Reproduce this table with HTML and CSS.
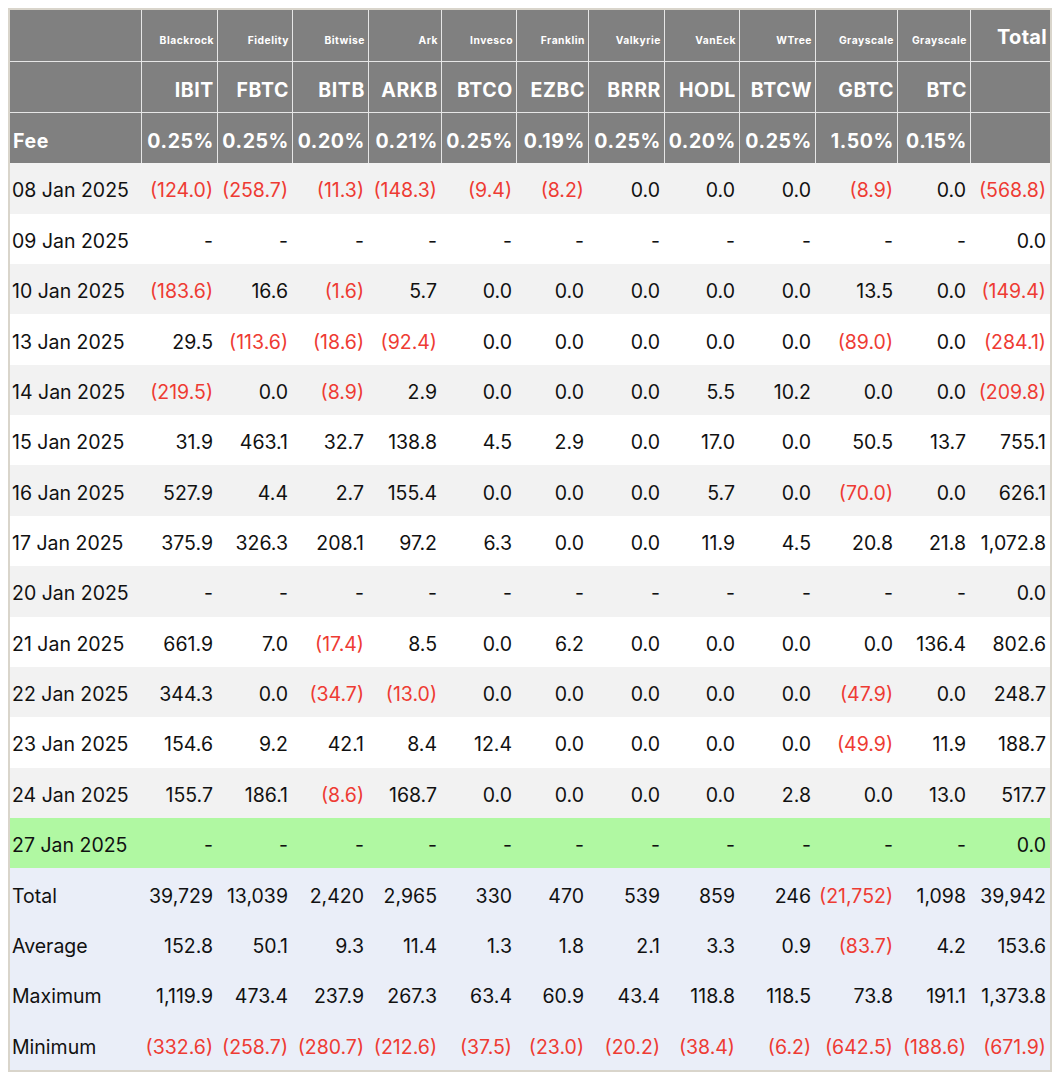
FILE: index.html
```html
<!DOCTYPE html>
<html lang="en">
<head>
<meta charset="utf-8">
<title>Bitcoin ETF Flow</title>
<link rel="stylesheet" href="styles.css">
</head>
<body>
<table class="flows">
  <colgroup>
    <col class="c-date">
    <col class="c76"><col class="c75"><col class="c76"><col class="c73"><col class="c75"><col class="c72">
    <col class="c76"><col class="c75"><col class="c76"><col class="c82"><col class="c73"><col class="c80">
  </colgroup>
  <thead>
    <tr class="h-issuer">
      <th class="first"></th>
      <th><span class="issuer">Blackrock</span></th>
      <th><span class="issuer">Fidelity</span></th>
      <th><span class="issuer">Bitwise</span></th>
      <th><span class="issuer">Ark</span></th>
      <th><span class="issuer">Invesco</span></th>
      <th><span class="issuer">Franklin</span></th>
      <th><span class="issuer">Valkyrie</span></th>
      <th><span class="issuer">VanEck</span></th>
      <th><span class="issuer">WTree</span></th>
      <th><span class="issuer">Grayscale</span></th>
      <th><span class="issuer">Grayscale</span></th>
      <th class="total-h">Total</th>
    </tr>
    <tr class="h-ticker">
      <th class="first"></th>
      <th>IBIT</th><th>FBTC</th><th>BITB</th><th>ARKB</th><th>BTCO</th><th>EZBC</th>
      <th>BRRR</th><th>HODL</th><th>BTCW</th><th>GBTC</th><th>BTC</th><th></th>
    </tr>
    <tr class="h-fee">
      <th class="first">Fee</th>
      <th>0.25%</th><th>0.25%</th><th>0.20%</th><th>0.21%</th><th>0.25%</th><th>0.19%</th>
      <th>0.25%</th><th>0.20%</th><th>0.25%</th><th>1.50%</th><th>0.15%</th><th></th>
    </tr>
  </thead>
  <tbody>
    <tr><td>08 Jan 2025</td><td class="neg">(124.0)</td><td class="neg">(258.7)</td><td class="neg">(11.3)</td><td class="neg">(148.3)</td><td class="neg">(9.4)</td><td class="neg">(8.2)</td><td>0.0</td><td>0.0</td><td>0.0</td><td class="neg">(8.9)</td><td>0.0</td><td class="neg">(568.8)</td></tr>
    <tr><td>09 Jan 2025</td><td>-</td><td>-</td><td>-</td><td>-</td><td>-</td><td>-</td><td>-</td><td>-</td><td>-</td><td>-</td><td>-</td><td>0.0</td></tr>
    <tr><td>10 Jan 2025</td><td class="neg">(183.6)</td><td>16.6</td><td class="neg">(1.6)</td><td>5.7</td><td>0.0</td><td>0.0</td><td>0.0</td><td>0.0</td><td>0.0</td><td>13.5</td><td>0.0</td><td class="neg">(149.4)</td></tr>
    <tr><td>13 Jan 2025</td><td>29.5</td><td class="neg">(113.6)</td><td class="neg">(18.6)</td><td class="neg">(92.4)</td><td>0.0</td><td>0.0</td><td>0.0</td><td>0.0</td><td>0.0</td><td class="neg">(89.0)</td><td>0.0</td><td class="neg">(284.1)</td></tr>
    <tr><td>14 Jan 2025</td><td class="neg">(219.5)</td><td>0.0</td><td class="neg">(8.9)</td><td>2.9</td><td>0.0</td><td>0.0</td><td>0.0</td><td>5.5</td><td>10.2</td><td>0.0</td><td>0.0</td><td class="neg">(209.8)</td></tr>
    <tr><td>15 Jan 2025</td><td>31.9</td><td>463.1</td><td>32.7</td><td>138.8</td><td>4.5</td><td>2.9</td><td>0.0</td><td>17.0</td><td>0.0</td><td>50.5</td><td>13.7</td><td>755.1</td></tr>
    <tr><td>16 Jan 2025</td><td>527.9</td><td>4.4</td><td>2.7</td><td>155.4</td><td>0.0</td><td>0.0</td><td>0.0</td><td>5.7</td><td>0.0</td><td class="neg">(70.0)</td><td>0.0</td><td>626.1</td></tr>
    <tr><td>17 Jan 2025</td><td>375.9</td><td>326.3</td><td>208.1</td><td>97.2</td><td>6.3</td><td>0.0</td><td>0.0</td><td>11.9</td><td>4.5</td><td>20.8</td><td>21.8</td><td>1,072.8</td></tr>
    <tr><td>20 Jan 2025</td><td>-</td><td>-</td><td>-</td><td>-</td><td>-</td><td>-</td><td>-</td><td>-</td><td>-</td><td>-</td><td>-</td><td>0.0</td></tr>
    <tr><td>21 Jan 2025</td><td>661.9</td><td>7.0</td><td class="neg">(17.4)</td><td>8.5</td><td>0.0</td><td>6.2</td><td>0.0</td><td>0.0</td><td>0.0</td><td>0.0</td><td>136.4</td><td>802.6</td></tr>
    <tr><td>22 Jan 2025</td><td>344.3</td><td>0.0</td><td class="neg">(34.7)</td><td class="neg">(13.0)</td><td>0.0</td><td>0.0</td><td>0.0</td><td>0.0</td><td>0.0</td><td class="neg">(47.9)</td><td>0.0</td><td>248.7</td></tr>
    <tr><td>23 Jan 2025</td><td>154.6</td><td>9.2</td><td>42.1</td><td>8.4</td><td>12.4</td><td>0.0</td><td>0.0</td><td>0.0</td><td>0.0</td><td class="neg">(49.9)</td><td>11.9</td><td>188.7</td></tr>
    <tr><td>24 Jan 2025</td><td>155.7</td><td>186.1</td><td class="neg">(8.6)</td><td>168.7</td><td>0.0</td><td>0.0</td><td>0.0</td><td>0.0</td><td>2.8</td><td>0.0</td><td>13.0</td><td>517.7</td></tr>
    <tr class="today"><td>27 Jan 2025</td><td>-</td><td>-</td><td>-</td><td>-</td><td>-</td><td>-</td><td>-</td><td>-</td><td>-</td><td>-</td><td>-</td><td>0.0</td></tr>
  </tbody>
  <tfoot>
    <tr><td>Total</td><td>39,729</td><td>13,039</td><td>2,420</td><td>2,965</td><td>330</td><td>470</td><td>539</td><td>859</td><td>246</td><td class="neg">(21,752)</td><td>1,098</td><td>39,942</td></tr>
    <tr><td>Average</td><td>152.8</td><td>50.1</td><td>9.3</td><td>11.4</td><td>1.3</td><td>1.8</td><td>2.1</td><td>3.3</td><td>0.9</td><td class="neg">(83.7)</td><td>4.2</td><td>153.6</td></tr>
    <tr><td>Maximum</td><td>1,119.9</td><td>473.4</td><td>237.9</td><td>267.3</td><td>63.4</td><td>60.9</td><td>43.4</td><td>118.8</td><td>118.5</td><td>73.8</td><td>191.1</td><td>1,373.8</td></tr>
    <tr><td>Minimum</td><td class="neg">(332.6)</td><td class="neg">(258.7)</td><td class="neg">(280.7)</td><td class="neg">(212.6)</td><td class="neg">(37.5)</td><td class="neg">(23.0)</td><td class="neg">(20.2)</td><td class="neg">(38.4)</td><td class="neg">(6.2)</td><td class="neg">(642.5)</td><td class="neg">(188.6)</td><td class="neg">(671.9)</td></tr>
  </tfoot>
</table>
</body>
</html>
```

FILE: styles.css
```css
html, body {
  margin: 0;
  padding: 0;
  background: #ffffff;
}

body {
  padding: 8px;
  font-family: Inter, "Liberation Sans", Arial, sans-serif;
  color: #111111;
}

.flows {
  border-collapse: separate;
  border-spacing: 0;
  table-layout: fixed;
  width: 1044px;
  border: 2px solid #d9d5cb;
  font-size: 19.5px;
}

.c-date { width: 131px; }
.c72 { width: 72px; }
.c73 { width: 73px; }
.c75 { width: 75px; }
.c76 { width: 76px; }
.c80 { width: 80px; }
.c82 { width: 82px; }

.flows th,
.flows td {
  padding: 4px 4px 0 2px;
  text-align: right;
  white-space: nowrap;
  vertical-align: middle;
  box-sizing: border-box;
  line-height: 24px;
}

.flows td {
  height: 50.37px;
  font-weight: 400;
}

.flows td:first-child {
  text-align: left;
}

/* header */
.flows thead th {
  background: #808080;
  color: #ffffff;
  font-weight: 700;
  border-left: 1px solid #e6e6e6;
  border-bottom: 1px solid #e6e6e6;
  letter-spacing: 0.6px;
  padding-top: 6px;
  padding-right: 3px;
}

.flows thead th.first {
  border-left: none;
  text-align: left;
  padding-left: 3px;
}

.flows thead tr.h-issuer th {
  height: 52px;
  padding-top: 3px;
}

.flows thead tr.h-ticker th {
  height: 51px;
}

.flows thead tr.h-fee th {
  border-bottom: none;
  height: 50.3px;
}

.h-issuer .issuer {
  font-size: 10.3px;
  letter-spacing: 0.5px;
  line-height: 14px;
}

.flows thead tr.h-issuer th.total-h {
  font-size: 20px;
  padding-top: 3px;
  letter-spacing: 0.3px;
}

/* body rows */
.flows tbody tr:nth-child(odd) td {
  background: #f2f2f2;
}

.flows tbody tr:nth-child(even) td {
  background: #ffffff;
}

.flows tbody tr.today td {
  background: #b0f8a2;
}

.flows tfoot td {
  background: #eaeef8;
}

.neg {
  color: #ee3b33;
}
```
